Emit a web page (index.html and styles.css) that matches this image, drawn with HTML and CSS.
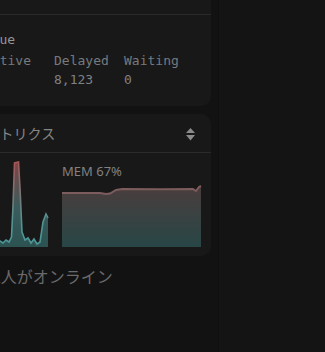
FILE: index.html
```html
<!DOCTYPE html>
<html lang="ja">
<head>
    <meta charset="UTF-8">
    <meta name="viewport" content="width=device-width, initial-scale=1.0">
    <title>Dashboard</title>
    <link rel="stylesheet" href="styles.css">
</head>
<body>
    <div class="layout">
        <aside class="sidebar">
            <div class="cards">
                <section class="card">
                    <div class="card-head"></div>
                    <div class="queue">
                        <div class="queue-title">Queue</div>
                        <div class="queue-grid">
                            <span>Active</span>
                            <span>Delayed</span>
                            <span>Waiting</span>
                            <span class="val">3</span>
                            <span class="val">8,123</span>
                            <span class="val">0</span>
                        </div>
                    </div>
                </section>

                <section class="card">
                    <div class="card-head metrics-head">
                        <span class="card-title">システムメトリクス</span>
                        <svg class="sort" width="9" height="13" viewBox="0 0 9 13">
                            <path d="M4.5 0 L9 5 L0 5 Z M0 7 L9 7 L4.5 12.5 Z" fill="#8a8a8a"/>
                        </svg>
                    </div>
                    <div class="charts">
                        <div class="chart">
                            <div class="chart-label">CPU 12%</div>
                            <svg class="spark" viewBox="0 0 139 61" preserveAspectRatio="none">
                                <defs>
                                    <linearGradient id="cpuLine" gradientUnits="userSpaceOnUse" x1="0" y1="-25" x2="0" y2="61">
                                        <stop offset="0" stop-color="#a85454"/>
                                        <stop offset="0.75" stop-color="#4e9696"/>
                                    </linearGradient>
                                    <linearGradient id="cpuFill" gradientUnits="userSpaceOnUse" x1="0" y1="-25" x2="0" y2="61">
                                        <stop offset="0" stop-color="#7e4646"/>
                                        <stop offset="0.55" stop-color="#3a5c5c"/>
                                        <stop offset="1" stop-color="#2c5252"/>
                                    </linearGradient>
                                </defs>
                                <path d="M0 56 L10 54 L20 57 L30 53 L40 56 L50 52 L60 55 L70 57 L80 53 L91 55 L94 57 L97 54 L100 56 L102.5 51 L104 20 L105.5 -23 L109.5 -24 L111 2 L113 46 L116 54 L119 52 L122 57 L125 53 L128 58 L131 56 L134 36 L137 28 L139 32 L139 61 L0 61 Z" fill="url(#cpuFill)"/>
                                <path d="M0 56 L10 54 L20 57 L30 53 L40 56 L50 52 L60 55 L70 57 L80 53 L91 55 L94 57 L97 54 L100 56 L102.5 51 L104 20 L105.5 -23 L109.5 -24 L111 2 L113 46 L116 54 L119 52 L122 57 L125 53 L128 58 L131 56 L134 36 L137 28 L139 32" fill="none" stroke="url(#cpuLine)" stroke-width="1.6"/>
                            </svg>
                        </div>
                        <div class="chart">
                            <div class="chart-label">MEM 67%</div>
                            <svg class="spark" viewBox="0 0 139 61" preserveAspectRatio="none">
                                <defs>
                                    <linearGradient id="memFill" x1="0" y1="0" x2="0" y2="1">
                                        <stop offset="0" stop-color="#4a3d3d"/>
                                        <stop offset="1" stop-color="#284646"/>
                                    </linearGradient>
                                </defs>
                                <path d="M0 7 L38 7 L44 8 L48 7.5 L54 4 L60 3 L100 3.2 L131 3 L134 5 L137 1 L139 0 L139 61 L0 61 Z" fill="url(#memFill)"/>
                                <path d="M0 7 L38 7 L44 8 L48 7.5 L54 4 L60 3 L100 3.2 L131 3 L134 5 L137 1 L139 0" fill="none" stroke="#7c5c5c" stroke-width="2"/>
                            </svg>
                        </div>
                    </div>
                </section>
            </div>
            <p class="online">12人がオンライン</p>
        </aside>
        <main class="content"></main>
    </div>
</body>
</html>
```

FILE: styles.css
```css
* {
    margin: 0;
    padding: 0;
    box-sizing: border-box;
}

body {
    background: #141414;
    font-family: "Noto Sans", "Noto Sans CJK JP", sans-serif;
    overflow: hidden;
}

.layout {
    display: flex;
    height: 352px;
}

.sidebar {
    width: 219px;
    flex-shrink: 0;
    background: #121212;
    border-right: 1px solid #0f0f0f;
    padding-right: 7px;
    overflow: hidden;
}

.content {
    flex: 1;
    background: #141414;
}

.cards {
    display: flex;
    flex-direction: column;
    gap: 8px;
    margin-top: -30px;
    margin-left: -101px;
}

.card {
    background: #181818;
    border-radius: 10px;
}

.card-head {
    height: 45px;
    border-bottom: 1px solid #2a2a2a;
}

.queue {
    padding: 15px 16px 17px 85px;
    font-family: "DejaVu Sans Mono", monospace;
    font-size: 13px;
    line-height: 19px;
    color: #767a7e;
}

.queue-title {
    margin-left: -8px;
    margin-bottom: 2px;
    color: #959595;
}

.queue-grid {
    display: grid;
    grid-template-columns: 70px 70px auto;
}

.queue-grid .val {
    color: #7e8185;
}

.queue-grid .val:first-of-type {
    visibility: hidden;
}

.metrics-head {
    height: 39px;
    display: flex;
    align-items: center;
    justify-content: space-between;
    padding: 0 16px 0 31px;
}

.card-title {
    font-family: "Noto Sans CJK JP", sans-serif;
    font-size: 14px;
    color: #868686;
}

.sort {
    display: block;
    margin-top: 2px;
}

.charts {
    display: flex;
    gap: 14px;
    padding: 10px 10px 9px 10px;
}

.chart {
    width: 139px;
}

.chart-label {
    font-size: 13px;
    line-height: 16px;
    color: #828282;
    margin-bottom: 7px;
}

.spark {
    display: block;
    width: 139px;
    height: 61px;
    overflow: visible;
}

.online {
    margin: 8px 0 0 -17px;
    font-family: "Noto Sans CJK JP", sans-serif;
    font-size: 16px;
    line-height: 24px;
    color: #6a6a6a;
}
```
